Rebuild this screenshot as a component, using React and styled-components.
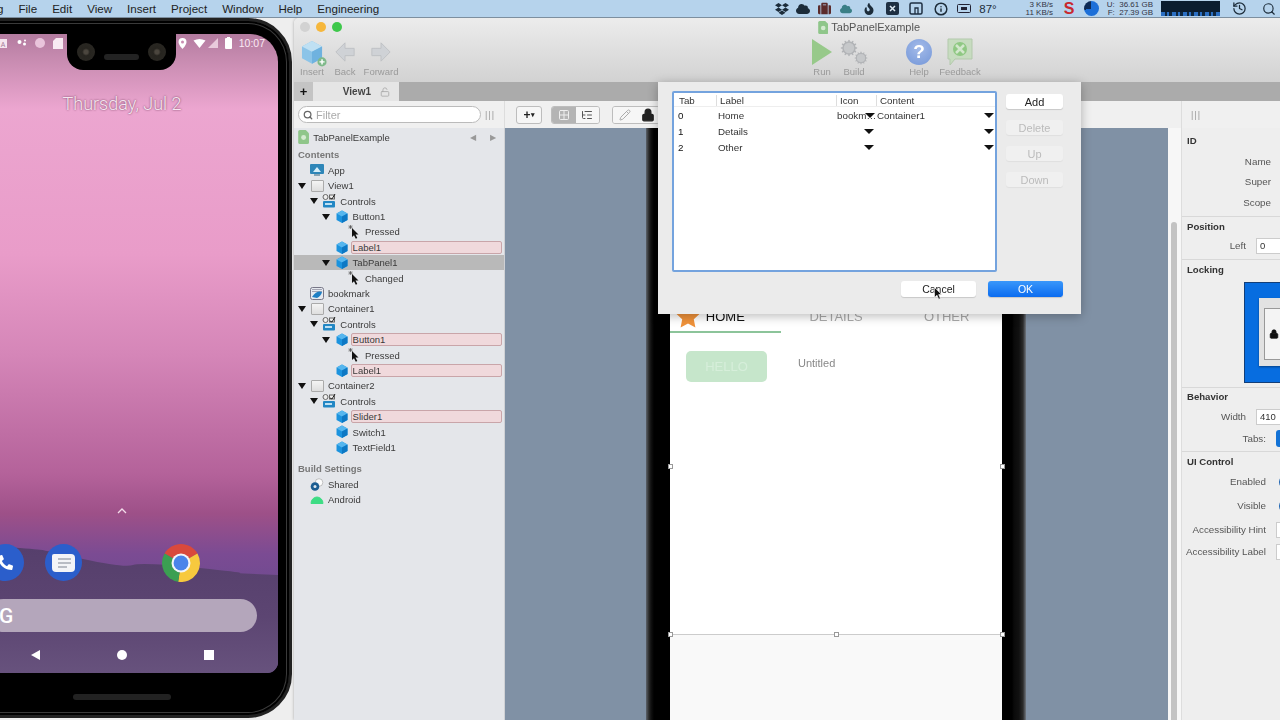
import React from "react";
import styled, { createGlobalStyle } from "styled-components";
import { FaDropbox, FaCloud, FaFire, FaSuitcase, FaPhone } from "react-icons/fa";
import { History, Search, Info, Lock, Unlock, Pencil, Grid2x2, ListTree, Cog } from "lucide-react";

const Global = createGlobalStyle`
  html, body { margin: 0; padding: 0; width: 1280px; height: 720px; overflow: hidden; background: #eee; }
  * { box-sizing: border-box; }
  body { font-family: "Liberation Sans", Arial, sans-serif; color: #333; }
`;

const Page = styled.div`
  width: 1280px; height: 720px; display: flex; flex-direction: column; overflow: hidden;
  position: relative; filter: blur(0.35px);
`;

/* ---------- mac menu bar ---------- */
const MenuBar = styled.div`
  height: 18px; flex: none; background: #b6d3ec; border-bottom: 1px solid #7d8f9f;
  display: flex; align-items: center; justify-content: space-between;
  font-size: 11.6px; color: #222; white-space: nowrap; overflow: hidden;
`;
const MenuList = styled.div` display: flex; gap: 15px; margin-left: -3px; `;
const StatusList = styled.div` display: flex; align-items: center; height: 18px; color: #1c2c3a; `;
const StatusSlot = styled.span`
  width: ${p => p.$w}px; display: flex; align-items: center; justify-content: center; flex: none;
  font-size: ${p => p.$size || 12}px; color: ${p => p.$color || "inherit"};
`;
const Net = styled.span`
  font-size: 8px; line-height: 8px; text-align: right; width: ${p => p.$w}px; flex: none; color: #334;
  white-space: pre; margin-left: ${p => p.$ml || 0}px;
`;
const Pie = styled.span`
  width: 15px; height: 15px; flex: none; border-radius: 50%; background: conic-gradient(#1c6fd8 0 72%, #0d2a55 72% 100%);
`;
const Meter = styled.span`
  width: 59px; height: 15px; flex: none; margin-left: 8px; background:
    repeating-linear-gradient(to right, #2a6fc4 0 4px, #0e2740 4px 6px, #2a6fc4 6px 8px, #0e2740 8px 11px) bottom / 100% 4px no-repeat, #0b1d2f;
`;

/* ---------- desktop ---------- */
const Desktop = styled.div` flex: 1; min-height: 0; display: flex; position: relative; overflow: hidden; `;

/* ---------- android emulator ---------- */
const PhoneHolder = styled.div` width: 294px; flex: none; background: #eeeeee; overflow: hidden; `;
const PhoneFrame = styled.div`
  width: 340px; height: 700px; margin-left: -48px; background: #000; border-radius: 44px;
  border: 3px solid #222; box-shadow: inset 0 0 0 2px #000, inset 0 0 0 3px #3a3a3a;
  padding: 13px 11px 0; display: flex; flex-direction: column;
`;
const Screen = styled.div`
  height: 639px; flex: none; border-radius: 28px 28px 11px 11px; position: relative; overflow: hidden;
  display: flex; flex-direction: column; align-items: center; color: #fff;
  background: linear-gradient(#b37b9f 0, #c78bb0 25px, #eca6d0 75px, #e99cc9 220px, #d586b8 320px, #b4629a 440px, #9d5088 480px, #7b4b93 520px, #6c4a8f 560px);
`;
const Hills = styled.svg` position: absolute; left: 0; right: 0; bottom: 0; width: 100%; height: 170px; `;
const StatusRow = styled.div`
  height: 18px; width: 100%; display: flex; align-items: center; justify-content: space-between;
  padding: 0 13px 0 33px; font-size: 10.5px; color: #fbeaf4; position: relative; flex: none;
`;
const StatusGroup = styled.div` display: flex; align-items: center; gap: ${p => p.$gap}px; `;
const Notch = styled.div`
  position: absolute; top: 0; left: 101px; width: 109px; height: 36px; background: #000;
  border-radius: 0 0 16px 16px; display: flex; justify-content: space-between; padding: 0 10px;
`;
const Camera = styled.span`
  width: 18px; height: 18px; border-radius: 50%; margin-top: 9px;
  background: radial-gradient(circle, #4b463e 0 15%, #26241f 30%, #2b2924 100%);
`;
const Speaker = styled.span` width: 35px; height: 6px; background: #232323; border-radius: 3px; margin-top: 20px; `;
const DateText = styled.div`
  margin-top: 42px; font-family: Roboto, sans-serif; font-weight: 300; font-size: 18px; line-height: 20px;
  color: #f6e6f0; text-shadow: 0 0 2px rgba(80,30,60,.9); position: relative;
`;
const Spacer = styled.div` flex: 1; `;
const Chevron = styled.svg` position: relative; margin-bottom: 30px; `;
const Dock = styled.div` display: flex; width: 292.5px; position: relative; justify-content: center; `;
const DockSlot = styled.div` width: 58.5px; height: 38px; display: flex; justify-content: center; flex: none; `;
const RoundApp = styled.div`
  width: 37px; height: 37px; border-radius: 50%; background: #2b5ecb; display: flex; align-items: center; justify-content: center;
  color: #fff; flex: none;
`;
const Bubble = styled.div`
  width: 23px; height: 18px; background: #f3f4f7; border-radius: 2px 4px 4px 4px; display: flex; flex-direction: column;
  gap: 2px; padding: 4px 4px 0 6px;
`;
const BubbleLine = styled.span` height: 2px; background: #b8bcc4; width: ${p => p.$w}px; `;
const SearchPill = styled.div`
  position: relative; width: 270px; height: 33px; margin-top: 17px; border-radius: 17px; background: #b4a6bb;
  display: flex; align-items: center; padding-left: 12px; flex: none;
  font-family: Roboto, sans-serif; font-weight: 500; font-size: 21px; color: #fff;
`;
const NavBar = styled.div` height: 41px; flex: none; display: flex; align-items: center; position: relative; padding-top: 5px; `;
const NavSlot = styled.div` width: 86.5px; display: flex; justify-content: center; `;
const NavDot = styled.span` width: 10px; height: 10px; background: #fff; border-radius: ${p => (p.$round ? "50%" : "0")}; `;
const BackTri = styled.span` width: 0; height: 0; border: 5px solid transparent; border-left: 0; border-right: 9px solid #fff; `;
const Chin = styled.div` flex: 1; display: flex; justify-content: center; padding-top: 21px; `;
const ChinBar = styled.span` width: 98px; height: 6px; background: #222; border-radius: 3px; `;

/* ---------- ide window ---------- */
const IDE = styled.div`
  width: 1164px; flex: none; display: flex; flex-direction: column; border-radius: 5px 5px 0 0; overflow: hidden;
  box-shadow: 0 0 3px rgba(0,0,0,.3);
`;
const Chrome = styled.div` height: 64px; flex: none; background: linear-gradient(#ececec, #d2d2d2); `;
const TitleRow = styled.div` height: 18px; display: grid; grid-template-columns: 1fr auto 1fr; align-items: center; `;
const Lights = styled.div` display: flex; gap: 6px; padding-left: 6px; `;
const Light = styled.span` width: 10px; height: 10px; border-radius: 50%; background: ${p => p.$c}; `;
const Title = styled.div` display: flex; align-items: center; gap: 3px; font-size: 11px; color: #555; margin-left: -14px; `;
const ToolRow = styled.div` display: flex; margin-top: 3px; `;
const ToolGroup = styled.div` display: flex; margin-left: ${p => p.$offset || 0}px; `;
const ToolBtn = styled.div`
  width: ${p => p.$w}px; display: flex; flex-direction: column; align-items: center; font-size: 9.5px; color: #9a9a9a;
`;
const ToolIcon = styled.div` height: 26px; display: flex; align-items: center; justify-content: center; margin-bottom: 1px; position: relative; `;
const ToolLabel = styled.span` line-height: 12px; white-space: nowrap; `;
const HelpIcon = styled.div`
  width: 26px; height: 26px; border-radius: 50%; background: radial-gradient(circle at 50% 35%, #a4bbe9, #7396d8);
  color: #fff; font-size: 19px; font-weight: 700; display: flex; align-items: center; justify-content: center;
`;
const TabBar = styled.div` height: 19px; flex: none; background: #ababab; display: flex; `;
const AddTab = styled.div` width: 19px; background: #c4c4c4; font-weight: 700; font-size: 13px; color: #111; display: flex; align-items: center; justify-content: center; `;
const ViewTab = styled.div`
  width: 86px; background: #e5e5e5; font-size: 10px; font-weight: 700; color: #444; display: flex; align-items: center;
  justify-content: flex-end; gap: 9px; padding-right: 9px;
`;
const SubBar = styled.div` height: 27px; flex: none; background: #f0f0f0; display: flex; align-items: center; `;
const SubLeft = styled.div` width: 211px; flex: none; height: 100%; display: flex; align-items: center; padding-left: 4px; border-right: 1px solid #ddd; `;
const Filter = styled.div`
  width: 183px; height: 17px; background: #fff; border: 1px solid #bbb; border-radius: 9px; display: flex; align-items: center;
  gap: 3px; padding-left: 4px; font-size: 11px; color: #aaa;
`;
const Grip = styled.span` font-size: 9px; color: #999; letter-spacing: 1px; margin-left: 4px; width: 14px; flex: none; `;
const SmallBtn = styled.div`
  height: 18px; border: 1px solid #bdbdbd; border-radius: 3px; background: #f6f6f6; display: flex; align-items: center; justify-content: center;
  width: ${p => p.$w}px; margin-left: ${p => p.$ml || 0}px; font-size: 12px; font-weight: 700; color: #222; flex: none;
`;
const Segment = styled.div`
  height: 18px; width: ${p => p.$w}px; margin-left: ${p => p.$ml}px; border: 1px solid #bdbdbd; border-radius: 3px; display: flex; overflow: hidden; flex: none;
`;
const SegItem = styled.div`
  flex: 1; display: flex; align-items: center; justify-content: center; background: ${p => (p.$on ? "#b4b4b4" : "#f6f6f6")};
  color: ${p => p.$color || "#555"};
`;
const SubRight = styled.div` margin-left: auto; width: 277px; height: 100%; display: flex; align-items: center; border-left: 1px solid #ddd; padding-left: 5px; `;

const Body = styled.div` flex: 1; min-height: 0; display: flex; `;

/* ---------- sidebar ---------- */
const Sidebar = styled.div` width: 211px; flex: none; background: #e4e6ea; border-right: 1px solid #cfd1d5; font-size: 9.5px; color: #3a3a3a; `;
const ProjectRow = styled.div` height: 18px; display: flex; align-items: center; padding: 0 8px 0 4px; gap: 4px; `;
const Pager = styled.span` margin-left: auto; display: flex; gap: 14px; color: #999; font-size: 8px; `;
const GroupHead = styled.div`
  font-weight: 700; color: #777; height: 15.4px; display: flex; align-items: center; padding-left: 4px; margin-top: ${p => p.$mt || 0}px;
`;
const Row = styled.div`
  height: 15.4px; display: flex; align-items: center; padding-left: ${p => 4 + p.$level * 12.3}px; padding-right: 2px;
  background: ${p => (p.$selected ? "#b9b9b9" : "transparent")}; margin-left: -1px;
`;
const Toggle = styled.span` width: 9px; flex: none; display: flex; justify-content: center; margin-right: 3px; `;
const Tri = styled.span` width: 0; height: 0; border: 4px solid transparent; border-bottom: 0; border-top: 6px solid #111; `;
const RowIcon = styled.span` width: 16px; height: 14px; flex: none; display: flex; align-items: center; justify-content: center; margin-right: 2px; `;
const RowLabel = styled.span`
  flex: ${p => (p.$warn ? 1 : "none")}; height: 13px; line-height: 11px; padding-left: 1px; border-radius: 2px;
  background: ${p => (p.$warn ? "#f0d9dc" : "transparent")};
  border: 1px solid ${p => (p.$warn ? "#c9a5a9" : "transparent")};
  margin-left: -1px;
`;
const Blank = styled.span`
  width: 13px; height: 12px; background: linear-gradient(#f4f4f4, #dedede); border: 1px solid #aaa; border-radius: 1px;
`;

/* ---------- canvas ---------- */
const Canvas = styled.div` width: 663px; flex: none; background: #8091a5; display: flex; justify-content: center; `;
const Device = styled.div`
  width: 380px; display: flex; padding: 0 24px; margin-left: -1px;
  background: linear-gradient(to right, #5d636b 0, #2a2a2a 3px, #111 5px, #000 8px, #000 1px) left / 24px 100% no-repeat,
    linear-gradient(to left, #71777f 0, #2c2c2c 3px, #111 7px, #0a0a0a 12px, #000 14px) right / 24px 100% no-repeat, #000;
`;
const DeviceScreen = styled.div` flex: 1; background: #fff; display: flex; flex-direction: column; padding-top: 172px; position: relative; `;
const Tabs = styled.div` display: grid; grid-template-columns: repeat(3, 1fr); height: 33px; flex: none; `;
const TabItem = styled.div`
  display: flex; align-items: center; justify-content: center; gap: 6px; font-size: 13px; padding-top: 1px;
  color: ${p => (p.$on ? "#111" : "#aaa")}; border-bottom: 2px solid ${p => (p.$on ? "#8cc49a" : "transparent")};
`;
const TabGap = styled.span` width: 24px; `;
const Content = styled.div` flex: 1; padding: 18px 16px; display: flex; align-items: flex-start; gap: 31px; `;
const Hello = styled.div`
  width: 81px; height: 31px; border-radius: 5px; background: #c6e6cb; color: #d6eeda; font-size: 13px;
  display: flex; align-items: center; justify-content: center;
`;
const Untitled = styled.div` font-size: 11px; color: #888; margin-top: 6px; `;
const DeviceFoot = styled.div` height: 86px; flex: none; background: #f9f9f9; border-top: 1px solid #ccc; `;
const Handle = styled.span`
  position: absolute; width: 5px; height: 5px; background: #fff; border: 1px solid #999; top: ${p => p.$y}px; left: ${p => p.$x - 2.5}px;
`;

const ScrollGutter = styled.div` width: 13px; flex: none; background: #f7f7f7; padding: 94px 4px 0 3px; `;
const ScrollThumb = styled.div` height: 100%; background: #c3c3c3; border-radius: 3px 3px 0 0; `;

/* ---------- inspector ---------- */
const Inspector = styled.div` flex: 1; background: #eeeeee; font-size: 9.8px; color: #555; border-left: 1px solid #ddd; `;
const Section = styled.div`
  height: ${p => p.$h}px; padding: ${p => p.$pad}px 0 0 5px; display: flex; flex-direction: column;
  border-bottom: ${p => (p.$last ? "none" : "1px solid #d8d8d8")};
`;
const SectionTitle = styled.div` font-weight: 700; color: #333; font-size: 9.6px; line-height: 12px; margin-bottom: ${p => p.$mb || 0}px; `;
const Field = styled.div` height: ${p => p.$h || 20.5}px; display: flex; align-items: center; margin-left: -5px; flex: none; `;
const FieldLabel = styled.div` width: ${p => p.$w}px; text-align: right; flex: none; white-space: nowrap; `;
const Input = styled.div`
  height: 16px; margin-left: 10px; background: #fff; border: 1px solid #ccc; width: 120px; flex: none; padding-left: 3px; font-size: 9.5px; line-height: 14px; color: #333;
`;
const Switch = styled.span` margin-left: 13px; width: 26px; height: 14px; border-radius: 7px; background: #155fb0; flex: none; `;
const TabsControl = styled.span` margin-left: 10px; width: 60px; height: 17px; border-radius: 3px; background: #1272d6; flex: none; `;
const LockBox = styled.div` width: 152px; height: 101px; margin-left: 57px; margin-top: 6px; background: #076de0; border: 1px solid #123e78; padding: 15px 14px; flex: none; `;
const LockWin = styled.div` height: 68px; background: #e2e2e2; padding: 10px 5px 6px; box-shadow: 0 1px 2px rgba(0,0,0,.4); `;
const LockInner = styled.div` height: 100%; border: 1px solid #999; background: #f4f4f4; display: flex; align-items: center; padding-left: 4px; color: #111; `;

/* ---------- sheet dialog ---------- */
const Sheet = styled.div`
  position: absolute; left: 658px; top: 64px; width: 423px; height: 232px; background: #ebebeb;
  box-shadow: 0 2px 10px rgba(0,0,0,.28); padding: 9px 18px 17px 14px; display: grid;
  grid-template-columns: 325px 1fr; grid-template-rows: 181px 1fr; column-gap: 9px; font-size: 9.8px;
`;
const ListBox = styled.div` background: #fff; border: 2.5px solid #74a3de; border-radius: 2px; `;
const ListRow = styled.div`
  display: grid; grid-template-columns: 40px 120px 40px 116px; padding-left: 4px; align-items: center; height: 16px; color: #333;
`;
const ListHead = styled(ListRow)` height: 14px; border-bottom: 1px solid #eee; margin-bottom: 1px; padding-top: 1px; padding-left: 5px; `;
const HeadCell = styled.div` border-left: ${p => (p.$first ? "none" : "1px solid #ddd")}; padding-left: ${p => (p.$first ? 0 : 3)}px; margin-left: ${p => (p.$first ? 0 : -3)}px; line-height: 11px; `;
const Cell = styled.div` position: relative; white-space: nowrap; margin-left: ${p => p.$ml || 0}px; height: 12px; line-height: 12px; color: ${p => (p.$dark ? "#111" : "inherit")}; `;
const Drop = styled.span`
  position: absolute; right: ${p => p.$r}px; top: 3px; width: 0; height: 0; border: 5px solid transparent; border-bottom: 0; border-top: 5px solid #111;
`;
const SideButtons = styled.div` display: flex; flex-direction: column; gap: 11px; padding-top: 3px; `;
const SheetBtn = styled.div`
  height: 15px; border-radius: 3px; display: flex; align-items: center; justify-content: center; font-size: 11px;
  background: ${p => (p.$off ? "#f0f0f0" : "#fff")}; color: ${p => (p.$off ? "#bbb" : "#222")};
  box-shadow: 0 1px 1px rgba(0,0,0,${p => (p.$off ? ".05" : ".15")});
`;
const Footer = styled.div` grid-column: 1 / 3; display: flex; justify-content: flex-end; align-items: flex-end; gap: 12px; `;
const FootBtn = styled.div`
  width: 75px; height: 16px; border-radius: 3px; display: flex; align-items: center; justify-content: center; font-size: 10.5px; position: relative;
  background: ${p => (p.$primary ? "linear-gradient(#3a97fa,#0b6cf0)" : "#fff")}; color: ${p => (p.$primary ? "#fff" : "#222")};
  box-shadow: 0 1px 1px rgba(0,0,0,.15);
`;
const Pointer = styled.svg` position: absolute; left: 33px; top: 6px; `;

/* ---------- drawn icons ---------- */
const Cube = ({ s = 12, plus }) => (
  <svg width={s} height={s * 1.12} viewBox="0 0 24 27" style={{ overflow: "visible" }}>
    <path d="M12 1 23 7v13l-11 6L1 20V7z" fill={plus ? "#8cc4e8" : "#1b93de"} />
    <path d="M12 1 23 7 12 13 1 7z" fill={plus ? "#bfe0f3" : "#55b6ee"} />
    <path d="M12 13 23 7v13l-11 6z" fill={plus ? "#6fb2df" : "#0d78c4"} />
    {plus && <circle cx="23" cy="24" r="5" fill="#7fb98a" />}
    {plus && <path d="M23 21.2v5.6M20.2 24h5.6" stroke="#fff" strokeWidth="1.6" />}
  </svg>
);
const Arrow = ({ flip }) => (
  <svg width="22" height="22" viewBox="0 0 24 24" style={{ transform: flip ? "scaleX(-1)" : "none" }}>
    <path d="M2 12 12 2v6h10v8H12v6z" fill="#cfd2d6" stroke="#bdbfc3" strokeWidth="1" />
  </svg>
);
const DocIcon = ({ h = 13 }) => (
  <svg width={h * 0.8} height={h} viewBox="0 0 10 13">
    <path d="M0 1.5Q0 0 1.5 0H7l3 3v8.5Q10 13 8.5 13h-7Q0 13 0 11.500z" fill="#8fc68a" />
    <circle cx="5" cy="7" r="2.300" fill="#d4ead0" />
  </svg>
);
const Gears = () => (
  <div style={{ display: "flex", width: 28, height: 26, position: "relative" }}>
    <Cog size={18} color="#b2b4b7" fill="#c6c8ca" style={{ position: "absolute", left: 0, top: 0 }} />
    <Cog size={14} color="#b2b4b7" fill="#c6c8ca" style={{ position: "absolute", left: 14, top: 12 }} />
  </div>
);
const Feedback = () => (
  <svg width="26" height="28" viewBox="0 0 26 28">
    <path d="M1 1h24v20H8l-5 6v-6H1z" fill="#c7dcc0" stroke="#b3c9ac" />
    <circle cx="13" cy="11" r="7" fill="#8fc883" />
    <path d="M9 7l8 8M17 7l-8 8" stroke="#d2e7cc" strokeWidth="2.500" />
  </svg>
);
const AppIcon = () => (
  <svg width="14" height="13" viewBox="0 0 14 13">
    <rect x="0" y="0" width="14" height="10" rx="1" fill="#2e86b8" />
    <path d="M3 8l4-5 4 5z" fill="#d7eef9" /><rect x="4" y="10" width="6" height="2" fill="#8aa5b5" />
  </svg>
);
const ControlsIcon = () => (
  <svg width="14" height="14" viewBox="0 0 14 14">
    <circle cx="3.500" cy="3" r="2.500" fill="#eee" stroke="#666" /><rect x="7.500" y="1" width="5" height="4" fill="#eee" stroke="#666" />
    <path d="M8 4l2 1 3-5" stroke="#222" fill="none" />
    <rect x="1" y="7" width="12" height="6.500" rx="1" fill="#2287c4" /><rect x="3" y="9" width="7" height="2" fill="#bde0f3" />
  </svg>
);
const EventIcon = () => (
  <svg width="12" height="14" viewBox="0 0 12 14">
    <path d="M4 3l6.500 6.500H7.500L9.300 13l-1.500.8L6 10.200 4 12z" fill="#111" />
    <path d="M2.500 0v4M.5 2h4M1 .5l3 3M4 .5l-3 3" stroke="#555" strokeWidth=".7" />
  </svg>
);
const BookmarkIcon = () => (
  <svg width="14" height="13" viewBox="0 0 14 13">
    <rect x=".5" y=".5" width="13" height="12" rx="2" fill="#e6eaf0" stroke="#778" />
    <path d="M2 4.500h10M2 2.500h10" stroke="#889" strokeWidth=".7" />
    <path d="M2 10q5-7 10-5-1 4-5 6z" fill="#1e7fc4" />
  </svg>
);
const SharedIcon = () => (
  <svg width="14" height="13" viewBox="0 0 14 13">
    <circle cx="9" cy="4.500" r="3.800" fill="#fcfcfc" stroke="#aaa" strokeWidth=".7" />
    <circle cx="5" cy="8.500" r="4.300" fill="#1c5e92" /><circle cx="5" cy="8.500" r="1.500" fill="#dfe8ef" />
  </svg>
);
const AndroidIcon = () => (
  <svg width="14" height="9" viewBox="0 0 14 9"><path d="M1 8.500a6 6.500 0 0 1 12 0z" fill="#3ddc84" stroke="#3ddc84" /></svg>
);
const Star = () => (
  <svg width="24" height="23" viewBox="0 0 24 23">
    <path d="M12 0l3.600 7.600 8.400 1-6.200 5.700 1.600 8.300L12 18.500 4.600 22.600l1.600-8.300L0 8.600l8.400-1z" fill="#f0923a" />
  </svg>
);
const ChromeLogo = () => (
  <svg width="38" height="38" viewBox="4 4 40 40">
    <path d="M24 24 6.700 14A20 20 0 0 1 41.300 14z" fill="#d9493c" />
    <path d="M24 24 41.300 14A20 20 0 0 1 21 43.800z" fill="#f7c93e" />
    <path d="M24 24 21 43.800A20 20 0 0 1 6.700 14z" fill="#3b9f52" />
    <circle cx="24" cy="24" r="10" fill="#f2f5f9" /><circle cx="24" cy="24" r="7.800" fill="#4a84ea" />
  </svg>
);
const XSquare = () => (
  <svg width="13" height="13" viewBox="0 0 13 13">
    <rect width="13" height="13" rx="2" fill="#1e2f42" />
    <path d="M4 4l5 5M9 4l-5 5" stroke="#dfeaf3" strokeWidth="1.500" />
  </svg>
);
const TabSquare = () => (
  <svg width="14" height="13" viewBox="0 0 14 13">
    <rect x="1" y="1" width="12" height="11" rx="1.500" fill="none" stroke="#1e2f42" strokeWidth="1.500" />
    <path d="M6 12V6h3v6" fill="none" stroke="#1e2f42" strokeWidth="1.300" />
  </svg>
);

const tree = [
  { l: 0, i: "app", t: "App" },
  { l: 0, o: 1, i: "blank", t: "View1" },
  { l: 1, o: 1, i: "ctl", t: "Controls" },
  { l: 2, o: 1, i: "cube", t: "Button1" },
  { l: 3, i: "ev", t: "Pressed" },
  { l: 2, i: "cube", t: "Label1", w: 1 },
  { l: 2, o: 1, i: "cube", t: "TabPanel1", s: 1 },
  { l: 3, i: "ev", t: "Changed" },
  { l: 0, i: "bm", t: "bookmark" },
  { l: 0, o: 1, i: "blank", t: "Container1" },
  { l: 1, o: 1, i: "ctl", t: "Controls" },
  { l: 2, o: 1, i: "cube", t: "Button1", w: 1 },
  { l: 3, i: "ev", t: "Pressed" },
  { l: 2, i: "cube", t: "Label1", w: 1 },
  { l: 0, o: 1, i: "blank", t: "Container2" },
  { l: 1, o: 1, i: "ctl", t: "Controls" },
  { l: 2, i: "cube", t: "Slider1", w: 1 },
  { l: 2, i: "cube", t: "Switch1" },
  { l: 2, i: "cube", t: "TextField1" },
];
const icons = {
  app: <AppIcon />, blank: <Blank />, ctl: <ControlsIcon />, cube: <Cube />, ev: <EventIcon />, bm: <BookmarkIcon />,
};

const TreeRow = ({ item }) => (
  <Row $level={item.l} $selected={item.s}>
    <Toggle>{item.o ? <Tri /> : null}</Toggle>
    <RowIcon>{icons[item.i]}</RowIcon>
    <RowLabel $warn={item.w}>{item.t}</RowLabel>
  </Row>
);

export default function App() {
  return (
    <Page>
      <Global />
      <MenuBar>
        <MenuList>
          <span>g</span><span>File</span><span>Edit</span><span>View</span><span>Insert</span>
          <span>Project</span><span>Window</span><span>Help</span><span>Engineering</span>
        </MenuList>
        <StatusList>
          <StatusSlot $w={21} $size={14}><FaDropbox /></StatusSlot>
          <StatusSlot $w={21} $size={14}><FaCloud /></StatusSlot>
          <StatusSlot $w={21} $size={13} $color="#5b2b2b"><FaSuitcase /></StatusSlot>
          <StatusSlot $w={23} $size={12} $color="#3a7f86"><FaCloud /></StatusSlot>
          <StatusSlot $w={23} $size={12}><FaFire /></StatusSlot>
          <StatusSlot $w={23}><XSquare /></StatusSlot>
          <StatusSlot $w={25}><TabSquare /></StatusSlot>
          <StatusSlot $w={25}><Info size={14} strokeWidth={2.5} /></StatusSlot>
          <StatusSlot $w={21}><svg width="15" height="9" viewBox="0 0 15 9"><rect x=".5" y=".5" width="13" height="8" rx="1" fill="none" stroke="#223" /><rect x="4" y="3" width="6" height="3" fill="#223" /></svg></StatusSlot>
          <StatusSlot $w={27} $size={11.500}>87°</StatusSlot>
          <Net $w={42} $ml={9.5}>{"3 KB/s\n11 KB/s"}</Net>
          <StatusSlot $w={32} $size={16} $color="#c8282e"><b>S</b></StatusSlot>
          <StatusSlot $w={12}><Pie /></StatusSlot>
          <Net $w={56}>{"U:  36.61 GB\nF:  27.39 GB"}</Net>
          <Meter />
          <StatusSlot $w={38}><History size={15} /></StatusSlot>
          <StatusSlot $w={22}><Search size={14} /></StatusSlot>
        </StatusList>
      </MenuBar>

      <Desktop>
        <PhoneHolder>
          <PhoneFrame>
            <Screen>
              <Hills viewBox="0 0 312 170" preserveAspectRatio="none">
                <defs>
                  <linearGradient id="hillFill" x1="0" y1="0" x2="0" y2="1">
                    <stop offset="0" stopColor="#563f6c" /><stop offset="0.55" stopColor="#5c4572" /><stop offset="1" stopColor="#67527d" />
                  </linearGradient>
                </defs>
                <path d="M0 50 Q30 43 54 45 T77 47 T117 56 T167 62 T234 65 T267 70 L312 72 V170 H0z" fill="url(#hillFill)" />
              </Hills>
              <StatusRow>
                <StatusGroup $gap={8}>
                  <svg width="10" height="9" viewBox="0 0 10 9"><rect width="8" height="9" fill="#f6e5ef" /><text x="4" y="7.500" fontSize="7" textAnchor="middle" fill="#a57a97" fontFamily="Roboto, sans-serif">A</text></svg>
                  <svg width="10" height="9" viewBox="0 0 10 9"><circle cx="2.500" cy="3" r="2" fill="#fff" /><circle cx="7.500" cy="5" r="1.500" fill="#fff" /><circle cx="8" cy="1.500" r="1" fill="#fff" /></svg>
                  <svg width="10" height="10"><circle cx="5" cy="5" r="5" fill="#e9c4db" /></svg>
                  <svg width="10" height="11"><path d="M3 0h7v11H0V3z" fill="#f8eaf2" /></svg>
                </StatusGroup>
                <StatusGroup $gap={0}>
                  <svg width="9" height="11" viewBox="0 0 9 11"><path d="M4.500 0a4 4 0 0 1 4 4c0 3-4 7-4 7s-4-4-4-7a4 4 0 0 1 4-4z" fill="#fff" /><circle cx="4.500" cy="4" r="1.500" fill="#c98cb2" /></svg>
                  <svg width="13" height="9" viewBox="0 0 12 9" style={{ marginLeft: 6 }}><path d="M0 1.500Q6-1.500 12 1.500L6 9z" fill="#fff" /></svg>
                  <svg width="10" height="10" viewBox="0 0 10 10" style={{ marginLeft: 2 }}><path d="M10 0v10H0z" fill="#e9cadc" /></svg>
                  <svg width="7" height="12" style={{ marginLeft: 7 }}><rect y="1" width="7" height="11" rx="1" fill="#fff" /><rect x="2" width="3" height="2" fill="#fff" /></svg>
                  <span style={{ marginLeft: 7 }}>10:07</span>
                </StatusGroup>
              </StatusRow>
              <Notch><Camera /><Speaker /><Camera /></Notch>
              <DateText>Thursday, Jul 2</DateText>
              <Spacer />
              <Chevron width="10" height="6" viewBox="0 0 10 6"><path d="M1 5l4-4 4 4" fill="none" stroke="#f3dcea" strokeWidth="1.300" /></Chevron>
              <Dock>
                <DockSlot><RoundApp><FaPhone size={15} style={{ transform: "scaleX(-1)" }} /></RoundApp></DockSlot>
                <DockSlot><RoundApp><Bubble><BubbleLine $w={13} /><BubbleLine $w={13} /><BubbleLine $w={9} /></Bubble></RoundApp></DockSlot>
                <DockSlot />
                <DockSlot><ChromeLogo /></DockSlot>
                <DockSlot />
              </Dock>
              <SearchPill>G</SearchPill>
              <NavBar>
                <NavSlot><BackTri /></NavSlot>
                <NavSlot><NavDot $round /></NavSlot>
                <NavSlot><NavDot /></NavSlot>
              </NavBar>
            </Screen>
            <Chin><ChinBar /></Chin>
          </PhoneFrame>
        </PhoneHolder>

        <IDE>
          <Chrome>
            <TitleRow>
              <Lights><Light $c="#d2d2d2" /><Light $c="#f6b73c" /><Light $c="#3ec84b" /></Lights>
              <Title><DocIcon h={13} /><span>TabPanelExample</span></Title>
              <span />
            </TitleRow>
            <ToolRow>
              <ToolGroup>
                <ToolBtn $w={36}><ToolIcon><Cube s={22} plus /></ToolIcon><ToolLabel>Insert</ToolLabel></ToolBtn>
                <ToolBtn $w={30}><ToolIcon><Arrow /></ToolIcon><ToolLabel>Back</ToolLabel></ToolBtn>
                <ToolBtn $w={42}><ToolIcon><Arrow flip /></ToolIcon><ToolLabel>Forward</ToolLabel></ToolBtn>
              </ToolGroup>
              <ToolGroup $offset={404}>
                <ToolBtn $w={32}><ToolIcon><svg width="22" height="28" viewBox="0 0 22 28"><path d="M1 1l20 13L1 27z" fill="#97c98a" /></svg></ToolIcon><ToolLabel>Run</ToolLabel></ToolBtn>
                <ToolBtn $w={32}><ToolIcon><Gears /></ToolIcon><ToolLabel>Build</ToolLabel></ToolBtn>
              </ToolGroup>
              <ToolGroup $offset={33}>
                <ToolBtn $w={32}><ToolIcon><HelpIcon>?</HelpIcon></ToolIcon><ToolLabel>Help</ToolLabel></ToolBtn>
                <ToolBtn $w={50}><ToolIcon><Feedback /></ToolIcon><ToolLabel>Feedback</ToolLabel></ToolBtn>
              </ToolGroup>
            </ToolRow>
          </Chrome>

          <TabBar>
            <AddTab>+</AddTab>
            <ViewTab>View1<Unlock size={10} color="#aaa" /></ViewTab>
          </TabBar>

          <SubBar>
            <SubLeft>
              <Filter><Search size={10} color="#666" strokeWidth={3} />Filter</Filter>
              <Grip>|||</Grip>
            </SubLeft>
            <SmallBtn $w={26} $ml={11}>+<span style={{ fontSize: 7 }}>▾</span></SmallBtn>
            <Segment $w={49} $ml={9}>
              <SegItem $on><Grid2x2 size={12} color="#eee" /></SegItem>
              <SegItem><ListTree size={12} /></SegItem>
            </Segment>
            <Segment $w={48} $ml={12}>
              <SegItem $color="#aaa"><Pencil size={12} /></SegItem>
              <SegItem $color="#222"><Lock size={14} fill="#222" /></SegItem>
            </Segment>
            <SubRight><Grip>|||</Grip></SubRight>
          </SubBar>

          <Body>
            <Sidebar>
              <ProjectRow>
                <DocIcon h={14} /><span>TabPanelExample</span>
                <Pager><span>◀</span><span>▶</span></Pager>
              </ProjectRow>
              <GroupHead $mt={1.3}>Contents</GroupHead>
              {tree.map((item, i) => <TreeRow key={i} item={item} />)}
              <GroupHead $mt={6}>Build Settings</GroupHead>
              <Row $level={0}><Toggle /><RowIcon><SharedIcon /></RowIcon><RowLabel>Shared</RowLabel></Row>
              <Row $level={0}><Toggle /><RowIcon><AndroidIcon /></RowIcon><RowLabel>Android</RowLabel></Row>
            </Sidebar>

            <Canvas>
              <Device>
                <DeviceScreen>
                  <Tabs>
                    <TabItem $on><Star />HOME<TabGap /></TabItem>
                    <TabItem>DETAILS</TabItem>
                    <TabItem>OTHER</TabItem>
                  </Tabs>
                  <Content>
                    <Hello>HELLO</Hello>
                    <Untitled>Untitled</Untitled>
                  </Content>
                  <DeviceFoot />
                  <Handle $x={0} $y={336} /><Handle $x={332} $y={336} />
                  <Handle $x={0} $y={504} /><Handle $x={166} $y={504} /><Handle $x={332} $y={504} />
                </DeviceScreen>
              </Device>
            </Canvas>

            <ScrollGutter><ScrollThumb /></ScrollGutter>

            <Inspector>
              <Section $h={88.5} $pad={7}>
                <SectionTitle $mb={4}>ID</SectionTitle>
                <Field><FieldLabel $w={89}>Name</FieldLabel></Field>
                <Field><FieldLabel $w={89}>Super</FieldLabel></Field>
                <Field><FieldLabel $w={89}>Scope</FieldLabel></Field>
              </Section>
              <Section $h={43} $pad={4}>
                <SectionTitle $mb={3}>Position</SectionTitle>
                <Field><FieldLabel $w={64}>Left</FieldLabel><Input>0</Input></Field>
              </Section>
              <Section $h={128} $pad={4}>
                <SectionTitle>Locking</SectionTitle>
                <LockBox><LockWin><LockInner><Lock size={10} fill="#111" /></LockInner></LockWin></LockBox>
              </Section>
              <Section $h={64} $pad={3}>
                <SectionTitle $mb={4}>Behavior</SectionTitle>
                <Field><FieldLabel $w={64}>Width</FieldLabel><Input>410</Input></Field>
                <Field $h={22}><FieldLabel $w={84}>Tabs:</FieldLabel><TabsControl /></Field>
              </Section>
              <Section $h={140} $pad={4} $last>
                <SectionTitle $mb={2}>UI Control</SectionTitle>
                <Field $h={24}><FieldLabel $w={84}>Enabled</FieldLabel><Switch /></Field>
                <Field $h={24}><FieldLabel $w={84}>Visible</FieldLabel><Switch /></Field>
                <Field $h={24}><FieldLabel $w={84}>Accessibility Hint</FieldLabel><Input /></Field>
                <Field $h={20}><FieldLabel $w={84}>Accessibility Label</FieldLabel><Input /></Field>
              </Section>
            </Inspector>
          </Body>
        </IDE>

        <Sheet>
          <ListBox>
            <ListHead>
              <HeadCell $first>Tab</HeadCell><HeadCell>Label</HeadCell><HeadCell>Icon</HeadCell><HeadCell>Content</HeadCell>
            </ListHead>
            <ListRow>
              <Cell $dark>0</Cell><Cell>Home</Cell>
              <Cell $ml={-1}>bookm…<Drop $r={3} /></Cell><Cell $ml={-1}>Container1<Drop $r={0} /></Cell>
            </ListRow>
            <ListRow>
              <Cell $dark>1</Cell><Cell>Details</Cell><Cell><Drop $r={4} /></Cell><Cell><Drop $r={0} /></Cell>
            </ListRow>
            <ListRow>
              <Cell $dark>2</Cell><Cell>Other</Cell><Cell><Drop $r={4} /></Cell><Cell><Drop $r={0} /></Cell>
            </ListRow>
          </ListBox>
          <SideButtons>
            <SheetBtn>Add</SheetBtn>
            <SheetBtn $off>Delete</SheetBtn>
            <SheetBtn $off>Up</SheetBtn>
            <SheetBtn $off>Down</SheetBtn>
          </SideButtons>
          <Footer>
            <FootBtn>Cancel
              <Pointer width="8" height="13" viewBox="0 0 8 13">
                <path d="M.5.5v10l2.500-2.300 1.700 4 1.700-.7-1.700-3.900h3z" fill="#111" stroke="#fff" strokeWidth=".6" />
              </Pointer>
            </FootBtn>
            <FootBtn $primary>OK</FootBtn>
          </Footer>
        </Sheet>
      </Desktop>
    </Page>
  );
}
